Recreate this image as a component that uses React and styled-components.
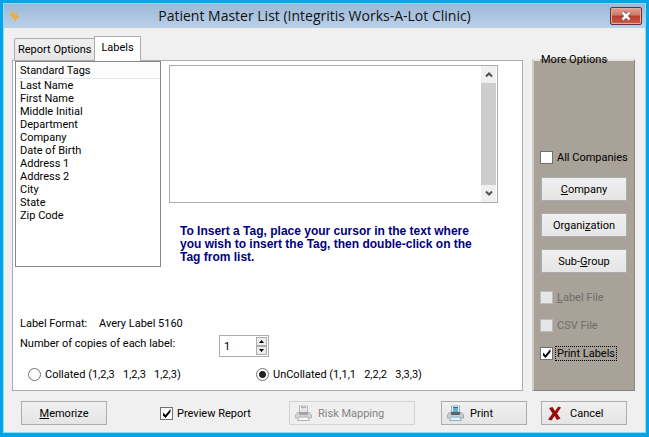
import * as React from "react"
import styled, { createGlobalStyle } from "styled-components"

const TAGS = [
  "Last Name",
  "First Name",
  "Middle Initial",
  "Department",
  "Company",
  "Date of Birth",
  "Address 1",
  "Address 2",
  "City",
  "State",
  "Zip Code",
]

const CheckBox = ({ id, label, focused, ...props }) => (
  <Field htmlFor={id} $muted={props.disabled}>
    <TickWrapper>
      <Tick id={id} type="checkbox" {...props} />
      <TickMark viewBox="0 0 13 13" aria-hidden="true">
        <path d="M3 5.500v3L5.500 11 10.500 5V2L5.500 8z" fill="#000" />
      </TickMark>
    </TickWrapper>
    <FieldText $focused={focused}>{label}</FieldText>
  </Field>
)

const PrinterIcon = ({ muted }) => (
  <svg width="17" height="16" viewBox="0 0 17 16" aria-hidden="true">
    <path d="M4.500 7v-6h8v6z" fill={muted ? "#f4f4f4" : "#e4f1f7"} stroke={muted ? "#b4b4b4" : "#9fb0ba"} />
    <path d="M6 2h5v5H6z" fill={muted ? "#e4e4e4" : "#62aed0"} />
    <path d="M6 2.500h5" stroke={muted ? "#aaa" : "#2f6f93"} />
    <path
      d="M2.500 7.500h12l2 2.500v3h-16v-3z"
      fill={muted ? "#d4d4d4" : "#c9cdd1"}
      stroke={muted ? "#b4b4b4" : "#a2a8ae"}
    />
    <path d="M4 7h9v3H4z" fill={muted ? "#a4a4a4" : "#59646d"} />
    <path d="M4 12h9l1.500 3.500h-12z" fill={muted ? "#f6f6f6" : "#dff3fc"} stroke={muted ? "#b4b4b4" : "#8cb4c9"} />
  </svg>
)

const Chevron = ({ down }) => (
  <svg width="8" height="7" viewBox="0 0 8 7" aria-hidden="true">
    <path d={down ? "M1 1.500l3 3 3-3" : "M1 5.500l3-3 3 3"} fill="none" stroke="#505050" strokeWidth="2" />
  </svg>
)

const Arrow = ({ down }) => (
  <svg width="5" height="3" viewBox="0 0 5 3" aria-hidden="true">
    <path d={down ? "M0 0h5L2.500 3z" : "M0 3h5L2.500 0z"} fill="#000" />
  </svg>
)

const App = () => {
  const [tab, setTab] = React.useState("labels")
  const [copies, setCopies] = React.useState(1)
  const [order, setOrder] = React.useState("uncollated")

  return (
    <>
      <GlobalStyle />
      <Window>
        <TitleBar>
          <TitleIcon viewBox="0 0 10 13" aria-hidden="true">
            <path d="M4.500 0L0 6h3L2 10l4-4.500L4 4.500zM6.500 3L4.500 7.500 6 8.500 5 13l5-7H7.500L8.500 3z" fill="#f2ad2e" />
          </TitleIcon>
          <Title>Patient Master List (Integritis Works-A-Lot Clinic)</Title>
          <CloseButton aria-label="Close">
            <svg width="12" height="10" viewBox="0 0 12 10" aria-hidden="true">
              <path d="M2.500 1.500l7 7M9.500 1.500l-7 7" stroke="#6b4a4a" strokeWidth="4" />
              <path d="M2.500 1.500l7 7M9.500 1.500l-7 7" stroke="#fff" strokeWidth="2.500" />
            </svg>
          </CloseButton>
        </TitleBar>

        <Body>
          <Main>
            <Tabs role="tablist">
              <Tab role="tab" aria-selected={tab === "options"} onClick={() => setTab("options")}>
                Report Options
              </Tab>
              <Tab role="tab" aria-selected={tab === "labels"} onClick={() => setTab("labels")}>
                Labels
              </Tab>
            </Tabs>
            <Panel role="tabpanel">
              <Editor>
                <TagBox>
                  <TagHeader>Standard Tags</TagHeader>
                  <TagList>
                    {TAGS.map(tag => (
                      <li key={tag}>{tag}</li>
                    ))}
                  </TagList>
                </TagBox>
                <TextColumn>
                  <TextFrame>
                    <TextArea aria-label="Label text" />
                    <ScrollBar>
                      <ScrollButton aria-label="Scroll up">
                        <Chevron />
                      </ScrollButton>
                      <ScrollButton aria-label="Scroll down">
                        <Chevron down />
                      </ScrollButton>
                    </ScrollBar>
                  </TextFrame>
                  <Hint>
                    To Insert a Tag, place your cursor in the text where
                    <br />
                    you wish to insert the Tag, then double-click on the
                    <br />
                    Tag from list.
                  </Hint>
                </TextColumn>
              </Editor>

              <Settings>
                <SettingRow $label="79px">
                  <span>Label Format:</span>
                  <span>Avery Label 5160</span>
                </SettingRow>
                <SettingRow $label="199px">
                  <label htmlFor="copies">Number of copies of each label:</label>
                  <Spinner>
                    <SpinnerInput
                      id="copies"
                      type="number"
                      value={copies}
                      onChange={e => setCopies(Number(e.target.value))}
                    />
                    <SpinnerButtons>
                      <SpinnerButton aria-label="More copies" onClick={() => setCopies(copies + 1)}>
                        <Arrow />
                      </SpinnerButton>
                      <SpinnerButton aria-label="Fewer copies" onClick={() => setCopies(Math.max(1, copies - 1))}>
                        <Arrow down />
                      </SpinnerButton>
                    </SpinnerButtons>
                  </Spinner>
                </SettingRow>
                <RadioRow>
                  <Field htmlFor="collated">
                    <Radio
                      id="collated"
                      type="radio"
                      name="order"
                      checked={order === "collated"}
                      onChange={() => setOrder("collated")}
                    />
                    <FieldText>{"Collated (1,2,3   1,2,3   1,2,3)"}</FieldText>
                  </Field>
                  <Field htmlFor="uncollated">
                    <Radio
                      id="uncollated"
                      type="radio"
                      name="order"
                      checked={order === "uncollated"}
                      onChange={() => setOrder("uncollated")}
                    />
                    <FieldText>{"UnCollated (1,1,1   2,2,2   3,3,3)"}</FieldText>
                  </Field>
                </RadioRow>
              </Settings>
            </Panel>
          </Main>

          <Options>
            <legend>More Options</legend>
            <OptionStack>
              <CheckBox id="all" label="All Companies" />
              <ButtonStack>
                <Button>
                  <span>
                    <u>C</u>ompany
                  </span>
                </Button>
                <Button>
                  <span>
                    Organi<u>z</u>ation
                  </span>
                </Button>
                <Button>
                  <span>
                    Sub-<u>G</u>roup
                  </span>
                </Button>
              </ButtonStack>
              <CheckStack>
                <CheckBox
                  id="label-file"
                  label={
                    <>
                      <u>L</u>abel File
                    </>
                  }
                  disabled
                />
                <CheckBox id="csv-file" label="CSV File" disabled />
                <CheckBox id="print-labels" label="Print Labels" focused defaultChecked />
              </CheckStack>
            </OptionStack>
          </Options>
        </Body>

        <Footer>
          <Button>
            <span>
              <u>M</u>emorize
            </span>
          </Button>
          <Preview>
            <CheckBox id="preview" label="Preview Report" defaultChecked />
          </Preview>
          <FooterActions>
            <IconButton $wide disabled>
              <PrinterIcon muted />
              Risk Mapping
            </IconButton>
            <PrintActions>
              <IconButton>
                <PrinterIcon />
                Print
              </IconButton>
              <IconButton>
                <svg width="17" height="15" viewBox="-1 0 17 15" aria-hidden="true">
                  <path
                    d="M1 2l3.500-1L7 5l3.500-4.500L13 1.500 9 7.500l3.500 5-3.500 1.500L6.500 10 3.500 14.500 0 13.500 4.500 7.500z"
                    fill="#990c0c"
                  />
                </svg>
                Cancel
              </IconButton>
            </PrintActions>
          </FooterActions>
        </Footer>
      </Window>
    </>
  )
}

const GlobalStyle = createGlobalStyle`
  * {
    box-sizing: border-box;
  }

  body {
    margin: 0;
  }

  body, button, input, textarea {
    font: 11px/13px Roboto, "Liberation Sans", Arial, sans-serif;
    color: #000;
  }

  u {
    text-underline-offset: 1px;
  }

  svg {
    display: block;
    flex: none;
  }
`

const Window = styled.div`
  display: flex;
  flex-direction: column;
  min-height: 100vh;
  border: 3px solid #04a4e6;
  border-bottom-width: 4px;
  background: #f0f0f0;
  box-shadow: inset 0 0 0 1px #8bdcf5;
  padding: 1px;
`

const TitleBar = styled.header`
  display: flex;
  align-items: center;
  height: 24px;
  padding: 0 3px 0 5px;
  background: linear-gradient(#9cb8d7, #bad1ea);
`

const TitleIcon = styled.svg`
  width: 10px;
  height: 13px;
`

const Title = styled.h1`
  flex: 1;
  margin: 0;
  font: 14px/24px "Open Sans", "Noto Sans", sans-serif;
  color: #111;
  text-align: center;
`

const CloseButton = styled.button`
  display: flex;
  align-items: center;
  justify-content: center;
  width: 32px;
  height: 18px;
  padding: 0;
  border: 1px solid #6a2f33;
  border-radius: 2px;
  background: linear-gradient(#dfa095, #cf7868 45%, #b83c2b 50%, #cf5c49);
  box-shadow: inset 0 0 0 1px #e2aaa0;
`

const Body = styled.main`
  display: flex;
  gap: 9px;
  padding: 0 10px 0 8px;
`

const Main = styled.section`
  display: flex;
  flex-direction: column;
  flex: 1;
  padding-top: 8px;
`

const Tabs = styled.div`
  display: flex;
  align-items: flex-end;
  height: 24px;
  padding-left: 2px;
`

const Tab = styled.button`
  height: 22px;
  padding: 0 3px;
  border: 1px solid #acacac;
  border-width: 1px 0 0 1px;
  border-radius: 2px 0 0;
  background: linear-gradient(#f0f0f0, #e5e5e5);

  &[aria-selected="true"] {
    position: relative;
    height: 25px;
    margin-bottom: -1px;
    padding: 0 6px 4px;
    border-width: 1px 1px 0;
    border-radius: 0;
    background: #fff;
  }
`

const Panel = styled.div`
  flex: 1;
  border: 1px solid #acacac;
  background: #fff;
`

const Editor = styled.div`
  display: flex;
  gap: 8px;
  padding: 0 24px 0 2px;
`

const TagBox = styled.div`
  width: 146px;
  height: 206px;
  border: 1px solid #828790;
`

const TagHeader = styled.div`
  height: 17px;
  padding: 2px 4px;
  border-bottom: 1px solid #e3e8ee;
  background: #fcfcfc;
`

const TagList = styled.ul`
  margin: 0;
  padding: 0 4px;
  list-style: none;
`

const TextColumn = styled.div`
  flex: 1;
  padding-top: 4px;
`

const TextFrame = styled.div`
  display: flex;
  height: 138px;
  padding-right: 1px;
  border: 1px solid #acacac;
`

const TextArea = styled.textarea`
  flex: 1;
  min-width: 0;
  border: 0;
  outline: none;
  resize: none;
`

const ScrollBar = styled.div`
  display: flex;
  flex-direction: column;
  justify-content: space-between;
  width: 15px;
  background: #cdcdcd;
`

const ScrollButton = styled.button`
  display: flex;
  align-items: center;
  justify-content: center;
  height: 17px;
  padding: 0;
  border: 0;
  background: #f0f0f0;
`

const Hint = styled.p`
  margin: 22px 0 0 11px;
  font: bold 12px/13px "Liberation Sans", Arial, sans-serif;
  color: #000080;
  white-space: nowrap;
`

const Settings = styled.div`
  padding: 50px 7px 8px;
`

const SettingRow = styled.div`
  display: grid;
  grid-template-columns: ${props => props.$label} max-content;
  margin-bottom: 5px;
  line-height: 13px;
  white-space: nowrap;

  label {
    padding-top: 2px;
  }
`

const Spinner = styled.div`
  display: flex;
  width: 50px;
  height: 22px;
  padding: 1px;
  border: 1px solid #acacac;
`

const SpinnerInput = styled.input`
  flex: 1;
  min-width: 0;
  padding: 0 3px;
  border: 0;
  outline: none;
  appearance: textfield;

  &::-webkit-inner-spin-button {
    display: none;
  }
`

const SpinnerButtons = styled.div`
  display: flex;
  flex-direction: column;
  width: 11px;
`

const SpinnerButton = styled.button`
  display: flex;
  align-items: center;
  justify-content: center;
  flex: 1;
  padding: 0;
  border: 1px solid #acacac;
  background: #ececec;
`

const RadioRow = styled.div`
  display: grid;
  grid-template-columns: 228px max-content;
  padding: 5px 8px 0;
`

const Field = styled.label`
  display: flex;
  align-items: center;
  gap: 3px;
  height: 15px;
  color: ${props => (props.$muted ? "#6d6d6d" : "#000")};
`

const FieldText = styled.span`
  padding: 0 1px;
  outline: ${props => (props.$focused ? "1px dotted #000" : "none")};
  white-space: pre;
`

const TickWrapper = styled.span`
  position: relative;
  width: 13px;
  height: 13px;
`

const TickMark = styled.svg`
  position: absolute;
  inset: 0;
  visibility: hidden;
  pointer-events: none;

  input:checked + & {
    visibility: visible;
  }
`

const Tick = styled.input`
  display: block;
  width: 13px;
  height: 13px;
  margin: 0;
  border: 1px solid #707070;
  background: #fff;
  appearance: none;

  &:disabled {
    border-color: #bcbcbc;
    background: #e6e6e6;
  }
`

const Radio = styled.input`
  width: 13px;
  height: 13px;
  margin: 0;
  border: 1px solid #707070;
  border-radius: 50%;
  background: #fff;
  appearance: none;

  &:checked {
    background: radial-gradient(#222 0 3px, #fff 4px);
  }
`

const Options = styled.fieldset`
  width: 103px;
  min-width: 0;
  margin: 25px 0 0;
  padding: 0 6px;
  border: 2px solid;
  border-color: #e3e3e3 #8a857e #8a857e #d0cdc8;
  border-width: 2px 1px 1px 2px;
  background: #a9a298;

  legend {
    padding: 0 1px;
    white-space: nowrap;
  }
`

const OptionStack = styled.div`
  display: flex;
  flex-direction: column;
  padding-top: 84px;
`

const ButtonStack = styled.div`
  display: flex;
  flex-direction: column;
  gap: 12px;
  padding: 12px 1px 17px;
`

const CheckStack = styled.div`
  display: flex;
  flex-direction: column;
  gap: 13px;
`

const Button = styled.button`
  display: flex;
  align-items: center;
  justify-content: center;
  width: 86px;
  height: 24px;
  padding: 0;
  border: 1px solid #acacac;
  background: linear-gradient(#f0f0f0, #e5e5e5);
`

const IconButton = styled(Button)`
  justify-content: flex-start;
  gap: 6px;
  width: ${props => (props.$wide ? "126px" : "86px")};
  padding-left: 5px;

  &:disabled {
    border-color: #d4d4d4;
    background: #efefef;
    color: #838383;
  }
`

const Footer = styled.footer`
  display: flex;
  align-items: center;
  padding: 10px 18px 7px 17px;
`

const Preview = styled.div`
  margin-left: 53px;
`

const FooterActions = styled.div`
  display: flex;
  gap: 26px;
  margin-left: auto;
`

const PrintActions = styled.div`
  display: flex;
  gap: 14px;
`

export default App
